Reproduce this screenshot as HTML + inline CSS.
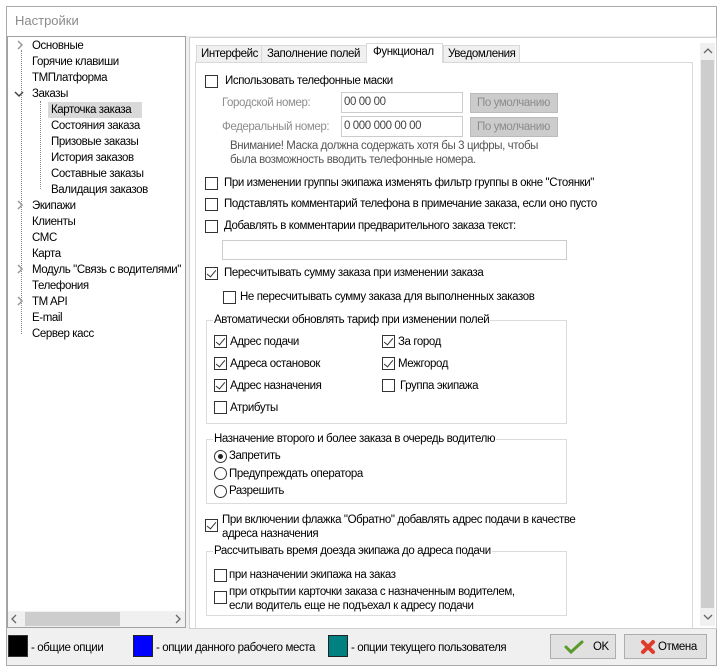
<!DOCTYPE html>
<html><head><meta charset="utf-8"><style>
*{box-sizing:border-box;margin:0;padding:0}
body{width:723px;height:671px;background:#fff;font-family:"Liberation Sans","DejaVu Sans",sans-serif;font-size:11.5px;color:#000;position:relative;overflow:hidden;letter-spacing:-0.4px}
.a{position:absolute;white-space:nowrap;line-height:14px}
.cb{position:absolute;width:13px;height:13px;border:1px solid #333;background:#fff}
.cb.on::after{content:"";position:absolute;left:3px;top:0px;width:4px;height:8px;border:solid #333;border-width:0 1.5px 1.5px 0;transform:rotate(40deg)}
.rb{position:absolute;width:13px;height:13px;border:1px solid #333;border-radius:50%;background:#fff}
.rb.on::after{content:"";position:absolute;left:3px;top:3px;width:5px;height:5px;border-radius:50%;background:#222}
.grp{position:absolute;border:1px solid #dcdcdc}
.gt{position:absolute;background:#fff;padding:0 1px;white-space:nowrap;line-height:14px}
.gray{color:#8c8c8c}
.dot{position:absolute;border-left:1px dotted #888}
.ex{position:absolute}
</style></head><body>
<div style="position:absolute;left:6px;top:6px;width:711px;height:660px;border:1px solid #aaa;background:#f0f0f0"></div>
<div style="position:absolute;left:7px;top:7px;width:709px;height:29px;background:#fff"></div>
<div class="a" style="left:15px;top:14px;color:#8a8a8a;font-size:13px;letter-spacing:0">Настройки</div>

<div style="position:absolute;left:7px;top:36px;width:179px;height:592px;border:1px solid #a0a0a0;background:#fff"></div>
<div class="dot" style="left:21px;top:50px;height:284px"></div>
<div class="dot" style="left:40px;top:101px;height:88px"></div>
<svg class="ex" style="left:16px;top:40px" width="8" height="10"><path d="M2 1 L6 5 L2 9" stroke="#999" stroke-width="1.5" fill="#fff"/></svg>
<svg class="ex" style="left:14px;top:90px" width="10" height="8"><path d="M1 2 L5 6 L9 2" stroke="#444" stroke-width="1.5" fill="#fff"/></svg>
<svg class="ex" style="left:16px;top:200px" width="8" height="10"><path d="M2 1 L6 5 L2 9" stroke="#999" stroke-width="1.5" fill="#fff"/></svg>
<svg class="ex" style="left:16px;top:264px" width="8" height="10"><path d="M2 1 L6 5 L2 9" stroke="#999" stroke-width="1.5" fill="#fff"/></svg>
<svg class="ex" style="left:16px;top:296px" width="8" height="10"><path d="M2 1 L6 5 L2 9" stroke="#999" stroke-width="1.5" fill="#fff"/></svg>
<div class="a" style="left:32px;top:39px">Основные</div>
<div class="a" style="left:32px;top:55px">Горячие клавиши</div>
<div class="a" style="left:32px;top:71px">ТМПлатформа</div>
<div class="a" style="left:32px;top:87px">Заказы</div>
<div style="position:absolute;left:48px;top:102px;width:94px;height:16px;background:#d9d9d9"></div>
<div class="a" style="left:51px;top:103px">Карточка заказа</div>
<div class="a" style="left:51px;top:119px">Состояния заказа</div>
<div class="a" style="left:51px;top:135px">Призовые заказы</div>
<div class="a" style="left:51px;top:151px">История заказов</div>
<div class="a" style="left:51px;top:167px">Составные заказы</div>
<div class="a" style="left:51px;top:183px">Валидация заказов</div>
<div class="a" style="left:32px;top:199px">Экипажи</div>
<div class="a" style="left:32px;top:215px">Клиенты</div>
<div class="a" style="left:32px;top:231px">СМС</div>
<div class="a" style="left:32px;top:247px">Карта</div>
<div class="a" style="left:32px;top:263px">Модуль "Связь с водителями"</div>
<div class="a" style="left:32px;top:279px">Телефония</div>
<div class="a" style="left:32px;top:295px">TM API</div>
<div class="a" style="left:32px;top:311px">E-mail</div>
<div class="a" style="left:32px;top:327px">Сервер касс</div>
<div style="position:absolute;left:8px;top:611px;width:177px;height:16px;background:#f0f0f0"></div>
<div style="position:absolute;left:25px;top:612px;width:95px;height:14px;background:#cdcdcd"></div>
<svg class="ex" style="left:10px;top:614px" width="8" height="10"><path d="M6 1 L2 5 L6 9" stroke="#666" stroke-width="1.3" fill="none"/></svg>
<svg class="ex" style="left:174px;top:614px" width="8" height="10"><path d="M2 1 L6 5 L2 9" stroke="#666" stroke-width="1.3" fill="none"/></svg>

<div style="position:absolute;left:189px;top:37px;width:528px;height:592px;border:1px solid #d0d0d0;background:#fff"></div>
<div style="position:absolute;left:700px;top:43px;width:15px;height:583px;background:#f0f0f0"></div>
<div style="position:absolute;left:701px;top:60px;width:13px;height:548px;background:#cdcdcd"></div>
<svg class="ex" style="left:703px;top:47px" width="10" height="8"><path d="M1 6 L5 2 L9 6" stroke="#666" stroke-width="1.3" fill="none"/></svg>
<svg class="ex" style="left:703px;top:613px" width="10" height="8"><path d="M1 2 L5 6 L9 2" stroke="#666" stroke-width="1.3" fill="none"/></svg>
<div style="position:absolute;left:195px;top:62px;width:498px;height:566px;border:1px solid #d9d9d9;border-bottom:none;background:#fff"></div>
<div style="position:absolute;left:196px;top:45px;width:66px;height:18px;border:1px solid #d9d9d9;background:#f0f0f0"></div>
<div class="a" style="left:201px;top:47px">Интерфейс</div>
<div style="position:absolute;left:261px;top:45px;width:106px;height:18px;border:1px solid #d9d9d9;background:#f0f0f0"></div>
<div class="a" style="left:267px;top:47px">Заполнение полей</div>
<div style="position:absolute;left:366px;top:43px;width:77px;height:20px;border:1px solid #d9d9d9;border-bottom:none;background:#fff"></div>
<div class="a" style="left:373px;top:45px">Функционал</div>
<div style="position:absolute;left:443px;top:45px;width:77px;height:18px;border:1px solid #d9d9d9;background:#f0f0f0"></div>
<div class="a" style="left:448px;top:47px">Уведомления</div>

<div class="cb" style="left:205px;top:75px"></div>
<div class="a" style="left:225px;top:74px">Использовать телефонные маски</div>
<div class="a gray" style="left:222px;top:96px">Городской номер:</div>
<div style="position:absolute;left:341px;top:92px;width:122px;height:21px;border:1px solid #ccc"></div>
<div class="a" style="left:344px;top:95px;color:#444">00 00 00</div>
<div style="position:absolute;left:470px;top:93px;width:88px;height:20px;border:1px solid #bbb;background:#ccc"></div>
<div class="a gray" style="left:477px;top:96px">По умолчанию</div>
<div class="a gray" style="left:222px;top:120px">Федеральный номер:</div>
<div style="position:absolute;left:341px;top:116px;width:122px;height:21px;border:1px solid #ccc"></div>
<div class="a" style="left:344px;top:119px;color:#444">0 000 000 00 00</div>
<div style="position:absolute;left:470px;top:117px;width:88px;height:20px;border:1px solid #bbb;background:#ccc"></div>
<div class="a gray" style="left:477px;top:120px">По умолчанию</div>
<div class="a" style="left:230px;top:139px;color:#555">Внимание! Маска должна содержать хотя бы 3 цифры, чтобы</div>
<div class="a" style="left:230px;top:153px;color:#555">была возможность вводить телефонные номера.</div>

<div class="cb" style="left:205px;top:177px"></div>
<div class="a" style="left:224px;top:176px">При изменении группы экипажа изменять фильтр группы в окне "Стоянки"</div>
<div class="cb" style="left:205px;top:198px"></div>
<div class="a" style="left:224px;top:197px">Подставлять комментарий телефона в примечание заказа, если оно пусто</div>
<div class="cb" style="left:205px;top:220px"></div>
<div class="a" style="left:224px;top:219px">Добавлять в комментарии предварительного заказа текст:</div>
<div style="position:absolute;left:222px;top:240px;width:345px;height:20px;border:1px solid #ccc"></div>

<div class="cb on" style="left:205px;top:267px"></div>
<div class="a" style="left:224px;top:266px">Пересчитывать сумму заказа при изменении заказа</div>
<div class="cb" style="left:223px;top:291px"></div>
<div class="a" style="left:240px;top:290px">Не пересчитывать сумму заказа для выполненных заказов</div>

<div class="grp" style="left:206px;top:320px;width:361px;height:104px"></div>
<div class="gt" style="left:213px;top:313px">Автоматически обновлять тариф при изменении полей</div>
<div class="cb on" style="left:214px;top:335px"></div><div class="a" style="left:230px;top:335px">Адрес подачи</div>
<div class="cb on" style="left:214px;top:357px"></div><div class="a" style="left:230px;top:357px">Адреса остановок</div>
<div class="cb on" style="left:214px;top:379px"></div><div class="a" style="left:230px;top:379px">Адрес назначения</div>
<div class="cb" style="left:214px;top:401px"></div><div class="a" style="left:230px;top:401px">Атрибуты</div>
<div class="cb on" style="left:382px;top:335px"></div><div class="a" style="left:398px;top:335px">За город</div>
<div class="cb on" style="left:382px;top:357px"></div><div class="a" style="left:398px;top:357px">Межгород</div>
<div class="cb" style="left:382px;top:379px"></div><div class="a" style="left:400px;top:379px">Группа экипажа</div>

<div class="grp" style="left:206px;top:439px;width:361px;height:65px"></div>
<div class="gt" style="left:213px;top:432px">Назначение второго и более заказа в очередь водителю</div>
<div class="rb on" style="left:214px;top:450px"></div><div class="a" style="left:229px;top:449px">Запретить</div>
<div class="rb" style="left:214px;top:467px"></div><div class="a" style="left:229px;top:467px">Предупреждать оператора</div>
<div class="rb" style="left:214px;top:485px"></div><div class="a" style="left:229px;top:484px">Разрешить</div>

<div class="cb on" style="left:205px;top:519px"></div>
<div class="a" style="left:222px;top:513px">При включении флажка "Обратно" добавлять адрес подачи в качестве</div>
<div class="a" style="left:222px;top:527px">адреса назначения</div>

<div class="grp" style="left:206px;top:551px;width:361px;height:65px"></div>
<div class="gt" style="left:213px;top:544px">Рассчитывать время доезда экипажа до адреса подачи</div>
<div class="cb" style="left:214px;top:569px"></div><div class="a" style="left:229px;top:568px">при назначении экипажа на заказ</div>
<div class="cb" style="left:214px;top:591px"></div>
<div class="a" style="left:229px;top:585px">при открытии карточки заказа с назначенным водителем,</div>
<div class="a" style="left:229px;top:599px">если водитель еще не подъехал к адресу подачи</div>

<div style="position:absolute;left:8px;top:635px;width:20px;height:22px;background:#000;border:1px solid #333"></div>
<div class="a" style="left:31px;top:641px">- общие опции</div>
<div style="position:absolute;left:133px;top:635px;width:20px;height:22px;background:#0000ff;border:1px solid #222"></div>
<div class="a" style="left:156px;top:641px">- опции данного рабочего места</div>
<div style="position:absolute;left:328px;top:635px;width:20px;height:22px;background:#008080;border:1px solid #222"></div>
<div class="a" style="left:351px;top:641px">- опции текущего пользователя</div>
<div style="position:absolute;left:550px;top:634px;width:66px;height:25px;border:1px solid #adadad;background:#e1e1e1"></div>
<svg style="position:absolute;left:564px;top:640px" width="20" height="14"><path d="M2 7 L7 12 L18 2" stroke="#5a9a2a" stroke-width="3" fill="none" stroke-linecap="round"/></svg>
<div class="a" style="left:593px;top:640px">OK</div>
<div style="position:absolute;left:624px;top:634px;width:83px;height:25px;border:1px solid #adadad;background:#e1e1e1"></div>
<svg style="position:absolute;left:640px;top:639px" width="16" height="16"><path d="M3 3 L13 13 M13 3 L3 13" stroke="#e03a2a" stroke-width="4" stroke-linecap="round"/></svg>
<div class="a" style="left:658px;top:640px">Отмена</div>
</body></html>
